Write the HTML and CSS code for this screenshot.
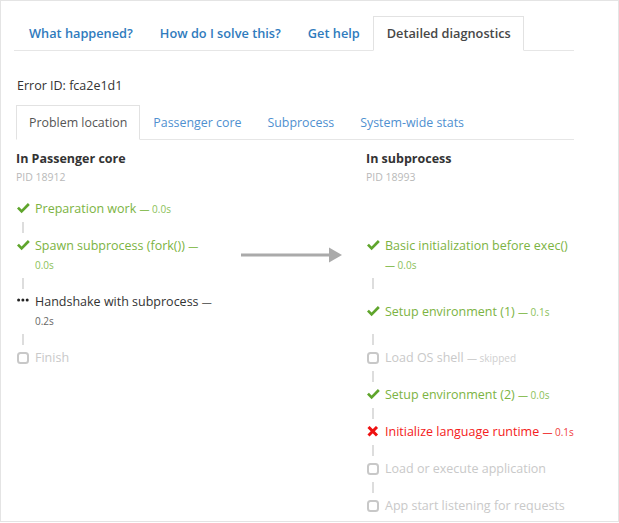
FILE: index.html
```html
<!DOCTYPE html>
<html>
<head>
<meta charset="utf-8">
<link rel="stylesheet" href="styles.css">
</head>
<body>
<div class="frame">
  <ul class="tabs tabs-main">
    <li><a>What happened?</a></li>
    <li><a>How do I solve this?</a></li>
    <li><a>Get help</a></li>
    <li class="active"><a>Detailed diagnostics</a></li>
  </ul>
  <p class="error-id">Error ID: fca2e1d1</p>
  <ul class="tabs tabs-sub">
    <li class="active"><a>Problem location</a></li>
    <li><a>Passenger core</a></li>
    <li><a>Subprocess</a></li>
    <li><a>System-wide stats</a></li>
  </ul>

  <div class="flow">
    <div class="col-head">
      <h3>In Passenger core</h3>
      <div class="pid">PID 18912</div>
    </div>
    <div></div>
    <div class="col-head">
      <h3>In subprocess</h3>
      <div class="pid">PID 18993</div>
    </div>

    <!-- row 1 -->
    <div class="step done">
      <span class="icon"><svg width="13" height="11" viewBox="0 0 13 11"><path d="M0 5.6 L1.9 3.7 L4.6 6.4 L10.9 0.1 L12.8 2 L4.6 10.2 Z"/></svg></span>
      <span class="label">Preparation work <span class="dur">— 0.0s</span></span>
    </div>
    <div></div>
    <div></div>

    <div class="conn"></div><div></div><div></div>

    <!-- row 2 -->
    <div class="step done">
      <span class="icon"><svg width="13" height="11" viewBox="0 0 13 11"><path d="M0 5.6 L1.9 3.7 L4.6 6.4 L10.9 0.1 L12.8 2 L4.6 10.2 Z"/></svg></span>
      <span class="label">Spawn subprocess (fork()) <span class="dur">— 0.0s</span></span>
    </div>
    <div class="arrow-cell">
      <svg width="101" height="16" viewBox="0 0 101 16"><rect x="0" y="6.5" width="90" height="3"/><path d="M88 0.5 L101 8 L88 15.5 Z"/></svg>
    </div>
    <div class="step done">
      <span class="icon"><svg width="13" height="11" viewBox="0 0 13 11"><path d="M0 5.6 L1.9 3.7 L4.6 6.4 L10.9 0.1 L12.8 2 L4.6 10.2 Z"/></svg></span>
      <span class="label">Basic initialization before exec() <span class="dur">— 0.0s</span></span>
    </div>

    <div class="conn"></div><div></div><div class="conn"></div>

    <!-- row 3 -->
    <div class="step running">
      <span class="icon"><svg width="12" height="11" viewBox="0 0 12 11"><circle cx="1.6" cy="4" r="1.5"/><circle cx="5.9" cy="4" r="1.5"/><circle cx="10.2" cy="4" r="1.5"/></svg></span>
      <span class="label">Handshake with subprocess <span class="dur">— 0.2s</span></span>
    </div>
    <div></div>
    <div class="step done">
      <span class="icon"><svg width="13" height="11" viewBox="0 0 13 11"><path d="M0 5.6 L1.9 3.7 L4.6 6.4 L10.9 0.1 L12.8 2 L4.6 10.2 Z"/></svg></span>
      <span class="label">Setup environment (1) <span class="dur">— 0.1s</span></span>
    </div>

    <div class="conn"></div><div></div><div class="conn"></div>

    <!-- row 4 -->
    <div class="step pending">
      <span class="icon"><svg width="12" height="12" viewBox="0 0 12 12"><rect x="1" y="1" width="10" height="10" rx="2.5"/></svg></span>
      <span class="label">Finish</span>
    </div>
    <div></div>
    <div class="step pending">
      <span class="icon"><svg width="12" height="12" viewBox="0 0 12 12"><rect x="1" y="1" width="10" height="10" rx="2.5"/></svg></span>
      <span class="label">Load OS shell <span class="dur">— skipped</span></span>
    </div>

    <div></div><div></div><div class="conn"></div>

    <!-- row 5 -->
    <div></div><div></div>
    <div class="step done">
      <span class="icon"><svg width="13" height="11" viewBox="0 0 13 11"><path d="M0 5.6 L1.9 3.7 L4.6 6.4 L10.9 0.1 L12.8 2 L4.6 10.2 Z"/></svg></span>
      <span class="label">Setup environment (2) <span class="dur">— 0.0s</span></span>
    </div>

    <div></div><div></div><div class="conn"></div>

    <!-- row 6 -->
    <div></div><div></div>
    <div class="step failed">
      <span class="icon"><svg width="12" height="11" viewBox="0 0 12 11"><path d="M1.5 1 L10 9.5 M10 1 L1.5 9.5"/></svg></span>
      <span class="label">Initialize language runtime <span class="dur">— 0.1s</span></span>
    </div>

    <div></div><div></div><div class="conn"></div>

    <!-- row 7 -->
    <div></div><div></div>
    <div class="step pending">
      <span class="icon"><svg width="12" height="12" viewBox="0 0 12 12"><rect x="1" y="1" width="10" height="10" rx="2.5"/></svg></span>
      <span class="label">Load or execute application</span>
    </div>

    <div></div><div></div><div class="conn"></div>

    <!-- row 8 -->
    <div></div><div></div>
    <div class="step pending">
      <span class="icon"><svg width="12" height="12" viewBox="0 0 12 12"><rect x="1" y="1" width="10" height="10" rx="2.5"/></svg></span>
      <span class="label">App start listening for requests</span>
    </div>
  </div>
</div>
</body>
</html>
```

FILE: styles.css
```css
html, body {
  margin: 0;
  padding: 0;
  background: #fff;
}

body {
  font-family: "Open Sans", "Liberation Sans", sans-serif;
  font-size: 12.5px;
  color: #333;
}

.frame {
  box-sizing: border-box;
  width: 619px;
  height: 522px;
  border: 1px solid #e4e4e4;
  padding: 15px 44px 0 13px;
  overflow: hidden;
}

.tabs {
  list-style: none;
  margin: 0;
  padding: 0;
  display: flex;
  border-bottom: 1px solid #e6e6e6;
}

.tabs li {
  margin-bottom: -1px;
  border: 1px solid transparent;
  border-bottom: none;
}

.tabs a {
  display: block;
  padding: 0 12px 0 13px;
  line-height: 33px;
  white-space: nowrap;
}

.tabs li.active {
  border-color: #e2e2e2;
  background: #fff;
  border-bottom: 1px solid #fff;
}

.tabs-main li:first-child a {
  padding-left: 14px;
}

.tabs-main a {
  font-size: 12.75px;
  font-weight: 600;
  color: #2f7bbd;
}

.tabs-main li.active a {
  color: #474747;
}

.tabs-sub {
  margin-left: 2px;
}

.tabs-sub a {
  padding: 0 12px;
  font-size: 12.4px;
  color: #4f90d0;
}

.tabs-sub li.active a {
  color: #555;
}

.error-id {
  margin: 25px 0 9px 3px;
  line-height: 20px;
  color: #333;
}

.flow {
  display: grid;
  grid-template-columns: 200px 150px 210px;
  align-items: center;
  margin-top: 9px;
  margin-left: 2px;
}

.col-head {
  align-self: start;
  margin-bottom: 13px;
}

.col-head h3 {
  margin: 0;
  font-size: 12.5px;
  font-weight: 700;
  line-height: 20px;
  color: #333;
}

.pid {
  font-size: 10.5px;
  line-height: 17px;
  color: #b9b9b9;
}

.step {
  display: flex;
  line-height: 19px;
}

.icon {
  flex: 0 0 19px;
  height: 19px;
  display: flex;
  align-items: center;
}

.icon svg {
  margin-left: 1px;
}

.label {
  flex: 1;
}

.dur {
  font-size: 10px;
  line-height: 1;
}

.done .label { color: #7cb342; }
.done .dur { color: #8cbf5a; }
.done svg path { fill: #5fa52c; }

.running .label { color: #333; }
.running .dur { color: #666; }
.running svg circle { fill: #222; }

.pending .label { color: #c9c9c9; }
.pending .dur { color: #cfcfcf; }
.pending svg rect {
  fill: none;
  stroke: #c8c8c8;
  stroke-width: 2;
}

.failed .label { color: #f42020; }
.failed .dur { color: #f04040; }
.failed svg path {
  stroke: #ee1111;
  stroke-width: 3;
  fill: none;
}

.conn {
  height: 18px;
  display: flex;
  align-items: center;
}

.conn::before {
  content: "";
  display: block;
  width: 2px;
  height: 11px;
  margin-left: 6px;
  background: #ddd;
}

.arrow-cell {
  display: flex;
  align-items: center;
  padding-left: 25px;
}

.arrow-cell svg {
  fill: #aaa;
}
```
